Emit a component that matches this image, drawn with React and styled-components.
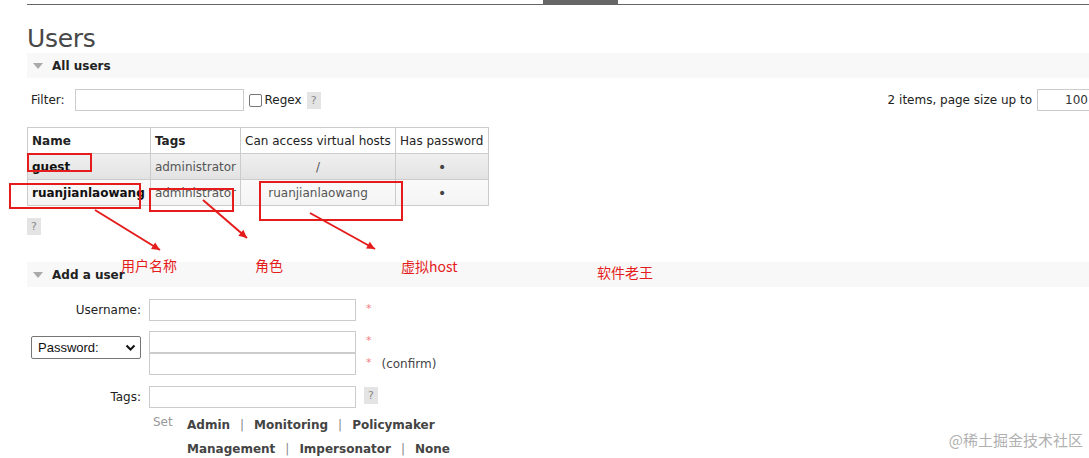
import React from 'react'
import styled, { createGlobalStyle } from 'styled-components'

const Global = createGlobalStyle`
  body {
    margin: 0;
    background: #fff;
    font-family: "DejaVu Sans", Verdana, sans-serif;
    font-size: 12px;
    color: #484848;
  }
`

const Page = styled.div`
  position: relative;
  width: 1089px;
  height: 458px;
  overflow: hidden;
  padding-left: 27px;
  box-sizing: border-box;
`

const TopNav = styled.div`
  height: 4px;
  border-bottom: 1px solid #666;
  display: flex;
`

const ActiveTab = styled.div`
  margin-left: 516px;
  width: 75px;
  height: 4px;
  background: #666;
`

const Title = styled.h1`
  margin: 21px 0 0 0;
  font-weight: normal;
  font-size: 25px;
  line-height: 26px;
  color: #484848;
  letter-spacing: -0.3px;
`

const SectionHead = styled.div`
  display: flex;
  align-items: center;
  height: 25px;
  margin-top: ${p => p.$top}px;
  background: #f8f8f8;
  font-weight: bold;
  font-size: 12px;
  color: #222;
  gap: 9px;
  padding-left: 6px;
`

const Arrow = styled.span`
  width: 0;
  height: 0;
  border-left: 5px solid transparent;
  border-right: 5px solid transparent;
  border-top: 6px solid #aaa;
`

const FilterRow = styled.div`
  display: flex;
  align-items: center;
  height: 22px;
  margin-top: 11px;
  padding-left: 4px;
`

const Label = styled.span`
  color: #222;
`

const Gap = styled.span`
  width: ${p => p.$w}px;
`

const TextBox = styled.input`
  box-sizing: border-box;
  width: ${p => p.$w}px;
  height: 22px;
  border: 1px solid #ccc;
  margin: 0;
  padding: 0 4px;
  font: inherit;
  text-align: ${p => p.$align || 'left'};
  color: #333;
`

const Check = styled.span`
  display: inline-block;
  width: 11px;
  height: 11px;
  border: 1px solid #777;
  border-radius: 2px;
  margin: 0 3px 0 5px;
`

const Help = styled.span`
  display: inline-flex;
  align-items: center;
  justify-content: center;
  width: 14px;
  height: 17px;
  background: #e4e4e4;
  color: #888;
  font-size: 11px;
  margin-left: ${p => p.$ml || 0}px;
  margin-top: ${p => p.$mt || 0}px;
`

const Spacer = styled.div`
  flex: 1;
`

const Pager = styled.div`
  display: flex;
  align-items: center;
  gap: 5px;
  margin-right: -4px;
`

const Table = styled.table`
  border-collapse: collapse;
  margin-top: 16px;
  width: 462px;
`

const Th = styled.th`
  height: 25px;
  border: 1px solid #ccc;
  text-align: left;
  padding: 0 4px;
  font-size: 12px;
  font-weight: ${p => (p.$bold ? 'bold' : 'normal')};
  color: #222;
  width: ${p => p.$w}px;
  white-space: nowrap;
  background: #fff;
`

const Row = styled.tr`
  background: ${p => (p.$alt ? 'linear-gradient(#f0f0f0, #e2e2e2)' : 'linear-gradient(#fafafa, #f4f4f4)')};
`

const Td = styled.td`
  height: 25px;
  border: 1px solid #ccc;
  padding: 0 4px;
  text-align: ${p => (p.$center ? 'center' : 'left')};
  font-weight: ${p => (p.$bold ? 'bold' : 'normal')};
  font-size: 12px;
  color: ${p => (p.$bold ? '#111' : '#555')};
  white-space: nowrap;
`

const Dot = styled.span`
  font-size: 14px;
  color: #444;
`

const Form = styled.div`
  display: grid;
  grid-template-columns: 114px 207px auto;
  column-gap: 8px;
  margin-top: 12px;
  align-items: start;
`

const FormLabel = styled.div`
  text-align: right;
  color: #222;
  line-height: 22px;
  margin-top: ${p => p.$mt || 0}px;
  grid-column: 1;
`

const SelectCell = styled.div`
  grid-column: 1;
  padding: 15px 0 0 4px;
`

const Select = styled.div`
  box-sizing: border-box;
  width: 110px;
  height: 23px;
  border: 1px solid #767676;
  border-radius: 2px;
  display: flex;
  align-items: center;
  justify-content: space-between;
  padding: 0 4px 0 6px;
  font-family: "Liberation Sans", Arial, sans-serif;
  font-size: 13px;
  color: #111;
`

const Stack = styled.div`
  display: flex;
  flex-direction: column;
  margin-top: ${p => p.$mt || 0}px;
`

const Notes = styled.div`
  display: flex;
  flex-direction: column;
  margin-top: ${p => p.$mt || 0}px;
`

const Note = styled.div`
  display: flex;
  align-items: center;
  height: 22px;
  gap: 10px;
  padding-left: 2px;
`

const Star = styled.span`
  color: #f08080;
  font-size: 11px;
  margin-top: -4px;
`

const Confirm = styled.span`
  color: #444;
`

const CellRow = styled.div`
  display: flex;
  align-items: center;
  margin-top: ${p => p.$mt || 0}px;
`

const SetBlock = styled.div`
  grid-column: 2 / 4;
  display: flex;
  margin-top: 5px;
`

const SetWord = styled.span`
  color: #999;
  width: 34px;
  padding-left: 4px;
  line-height: 18px;
`

const TagLines = styled.div`
  display: flex;
  flex-direction: column;
  gap: 6px;
  margin-top: 3px;
`

const TagLine = styled.div`
  display: flex;
  gap: 10px;
  font-weight: bold;
  font-size: 12px;
  color: #444;
  line-height: 18px;
`

const Sep = styled.span`
  font-weight: normal;
  color: #888;
`

const Mark = styled.div`
  position: absolute;
  border: 2px solid #e51c1c;
  box-sizing: border-box;
`

const Callout = styled.div`
  position: absolute;
  color: #e51c1c;
  font-family: "Noto Sans CJK SC", "DejaVu Sans", sans-serif;
  font-size: 14px;
  line-height: 16px;
  white-space: nowrap;
`

const Watermark = styled.div`
  position: absolute;
  right: 6px;
  bottom: 8px;
  color: #b0b0b0;
  font-family: "Noto Sans CJK SC", sans-serif;
  font-size: 15px;
`

const Arrows = styled.svg`
  position: absolute;
  left: 0;
  top: 0;
  pointer-events: none;
`

const marks = [
  { l: 27, t: 153, w: 65, h: 19 },
  { l: 9, t: 183, w: 132, h: 26 },
  { l: 149, t: 188, w: 85, h: 24 },
  { l: 259, t: 181, w: 144, h: 40 },
]

const labels = [
  { l: 121, t: 257, text: '用户名称' },
  { l: 255, t: 257, text: '角色' },
  { l: 401, t: 258, text: '虚拟host' },
  { l: 597, t: 264, text: '软件老王' },
]

const arrows = [
  [95, 210, 160, 250],
  [203, 200, 247, 238],
  [310, 213, 375, 249],
]

function ArrowLine({ x1, y1, x2, y2 }) {
  const a = Math.atan2(y2 - y1, x2 - x1)
  const s = 9
  const p1 = [x2 - s * Math.cos(a - 0.45), y2 - s * Math.sin(a - 0.45)]
  const p2 = [x2 - s * Math.cos(a + 0.45), y2 - s * Math.sin(a + 0.45)]
  return (
    <g>
      <line x1={x1} y1={y1} x2={x2} y2={y2} stroke="#e51c1c" strokeWidth="2" />
      <polygon points={`${x2},${y2} ${p1[0]},${p1[1]} ${p2[0]},${p2[1]}`} fill="#e51c1c" />
    </g>
  )
}

const users = [
  { name: 'guest', tags: 'administrator', vhost: '/', alt: true },
  { name: 'ruanjianlaowang', tags: 'administrator', vhost: 'ruanjianlaowang', alt: false },
]

export default function App() {
  return (
    <Page>
      <Global />
      <TopNav>
        <ActiveTab />
      </TopNav>
      <Title>Users</Title>
      <SectionHead $top={1}>
        <Arrow />
        All users
      </SectionHead>
      <FilterRow>
        <Label>Filter:</Label>
        <Gap $w={10} />
        <TextBox $w={169} />
        <Check />
        <Label>Regex</Label>
        <Help $ml={5}>?</Help>
        <Spacer />
        <Pager>
          <Label>2 items, page size up to</Label>
          <TextBox $w={56} $align="right" defaultValue="100" />
        </Pager>
      </FilterRow>
      <Table>
        <thead>
          <tr>
            <Th $bold $w={114}>Name</Th>
            <Th $bold $w={81}>Tags</Th>
            <Th $w={146}>Can access virtual hosts</Th>
            <Th $w={84}>Has password</Th>
          </tr>
        </thead>
        <tbody>
          {users.map(u => (
            <Row key={u.name} $alt={u.alt}>
              <Td $bold>{u.name}</Td>
              <Td>{u.tags}</Td>
              <Td $center>{u.vhost}</Td>
              <Td $center><Dot>•</Dot></Td>
            </Row>
          ))}
        </tbody>
      </Table>
      <Help $mt={12}>?</Help>
      <SectionHead $top={27}>
        <Arrow />
        Add a user
      </SectionHead>
      <Form>
        <FormLabel>Username:</FormLabel>
        <TextBox $w={207} />
        <Notes>
          <Note><Star>*</Star></Note>
        </Notes>

        <SelectCell>
          <Select>
            Password:
            <svg width="11" height="8" viewBox="0 0 11 8">
              <path d="M1.5 1.5 L5.5 5.5 L9.5 1.5" stroke="#111" strokeWidth="2" fill="none" />
            </svg>
          </Select>
        </SelectCell>
        <Stack $mt={10}>
          <TextBox $w={207} />
          <TextBox $w={207} />
        </Stack>
        <Notes $mt={10}>
          <Note><Star>*</Star></Note>
          <Note><Star>*</Star><Confirm>(confirm)</Confirm></Note>
        </Notes>

        <FormLabel $mt={11}>Tags:</FormLabel>
        <CellRow $mt={11}>
          <TextBox $w={207} />
        </CellRow>
        <CellRow $mt={12}>
          <Help>?</Help>
        </CellRow>

        <SetBlock>
          <SetWord>Set</SetWord>
          <TagLines>
            <TagLine>
              <span>Admin</span><Sep>|</Sep><span>Monitoring</span><Sep>|</Sep><span>Policymaker</span>
            </TagLine>
            <TagLine>
              <span>Management</span><Sep>|</Sep><span>Impersonator</span><Sep>|</Sep><span>None</span>
            </TagLine>
          </TagLines>
        </SetBlock>
      </Form>

      {marks.map((m, i) => (
        <Mark key={i} style={{ left: m.l, top: m.t, width: m.w, height: m.h }} />
      ))}
      <Arrows width="1089" height="458">
        {arrows.map((a, i) => (
          <ArrowLine key={i} x1={a[0]} y1={a[1]} x2={a[2]} y2={a[3]} />
        ))}
      </Arrows>
      {labels.map(l => (
        <Callout key={l.text} style={{ left: l.l, top: l.t }}>{l.text}</Callout>
      ))}
      <Watermark>@稀土掘金技术社区</Watermark>
    </Page>
  )
}
